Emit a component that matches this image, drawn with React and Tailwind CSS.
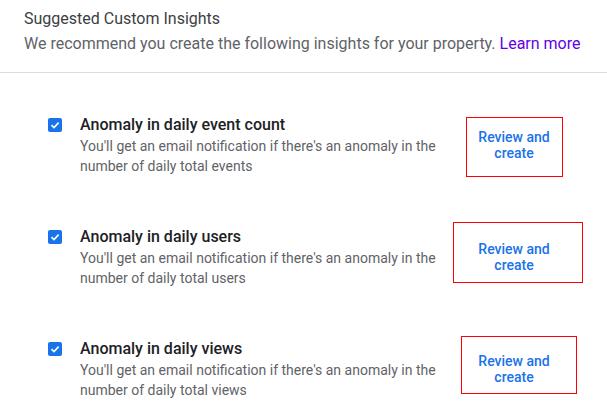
import React from "react";

const items = [
  { title: "Anomaly in daily event count", desc1: "You'll get an email notification if there's an anomaly in the", desc2: "number of daily total events", box: { left: 2, top: -12, w: 97, h: 60 } },
  { title: "Anomaly in daily users", desc1: "You'll get an email notification if there's an anomaly in the", desc2: "number of daily total users", box: { left: -11, top: -19, w: 130, h: 61 } },
  { title: "Anomaly in daily views", desc1: "You'll get an email notification if there's an anomaly in the", desc2: "number of daily total views", box: { left: -3, top: -17, w: 116, h: 58 } },
];

function Check() {
  return (
    <div className="w-[14px] h-[14px] rounded-[2px] bg-[#1a73e8] flex items-center justify-center mt-[3px] shrink-0">
      <svg width="10" height="10" viewBox="0 0 10 10" fill="none">
        <path d="M1.5 5.2 L4 7.6 L8.6 2.6" stroke="white" strokeWidth="1.6" fill="none" />
      </svg>
    </div>
  );
}

export default function App() {
  return (
    <div className="w-[607px] h-[406px] bg-white overflow-hidden" style={{ fontFamily: "Roboto, 'Liberation Sans', sans-serif" }}>
      <div className="pl-[24px] pt-[7px] pb-[16px] border-b border-[#dadce0]">
        <div className="text-[16px] leading-[24px] text-[#3c4043]">Suggested Custom Insights</div>
        <div className="text-[16px] leading-[24px] text-[#5f6368] mt-[1px]">
          We recommend you create the following insights for your property.{" "}
          <span className="text-[#6200ea]">Learn more</span>
        </div>
      </div>
      <div className="pt-[42px] flex flex-col gap-[51px]">
        {items.map((it, i) => (
          <div key={i} className="flex items-start pl-[48px]">
            <Check />
            <div className="ml-[18px] w-[380px] shrink-0">
              <div className="text-[16px] leading-[20px] font-medium text-[#202124]">{it.title}</div>
              <div className="text-[14px] leading-[20px] text-[#5f6368] mt-[1px]">
                {it.desc1}
                <br />
                {it.desc2}
              </div>
            </div>
            <div className="relative w-[100px] ml-[4px] mt-[14px] text-center text-[14px] leading-[16px] font-medium text-[#1a73e8]">
              Review and
              <br />
              create
              <div
                className="absolute border border-[#ff0000]"
                style={{ left: it.box.left, top: it.box.top, width: it.box.w, height: it.box.h }}
              />
            </div>
          </div>
        ))}
      </div>
    </div>
  );
}
